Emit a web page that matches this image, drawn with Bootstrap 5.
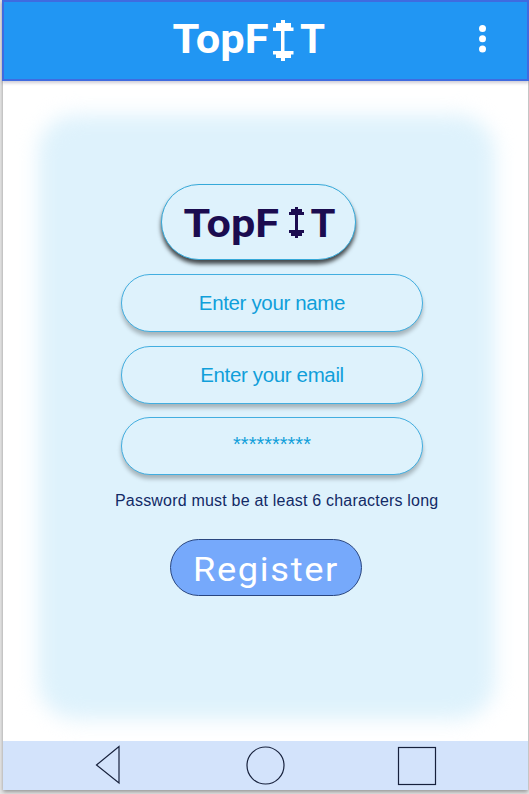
<!DOCTYPE html>
<html lang="en">
<head>
<meta charset="utf-8">
<meta name="viewport" content="width=device-width, initial-scale=1">
<title>TopFIT</title>
<link rel="stylesheet" href="https://cdn.jsdelivr.net/npm/bootstrap@5.3.0/dist/css/bootstrap.min.css">
<style>
body{background:#e6e6e6;font-family:"Liberation Sans",Arial,sans-serif;height:794px;overflow:hidden}
.phone{width:525px;height:790px;margin-left:3px;background:#fff;box-shadow:0 2px 4px rgba(0,0,0,.35)}
.topbar{height:81px;margin:0 -1px;background:#2196f3;border:2px solid #3f6be0;box-shadow:0 2px 3px rgba(60,50,90,.25);z-index:2}
.brand{width:152px;height:44px;margin:18px 0 0 169px}
.dots{width:8px;height:28px;margin:23px 0 0 153px}
svg{display:block;overflow:visible}
svg text{font-family:Roboto,"Liberation Sans",sans-serif}
.panel{height:660px;padding-top:103px;isolation:isolate}
.panel::before{content:"";position:absolute;z-index:-1;left:35px;right:33px;top:34px;bottom:22px;border-radius:38px;background:#def2fc;filter:blur(10px)}
.logo-pill{width:195px;height:76px;margin-left:158px;border:1px solid #35a9d9;background:#def2fc;box-shadow:0 4px 4px rgba(0,0,0,.7)}
.logo-pill svg{margin:22px 0 0 22px}
.field{width:302px;height:58px;margin-left:118px;border:1px solid #42aee0;background:#def2fc;color:#109fda;font-size:20.5px;letter-spacing:-.35px;text-align:center;box-shadow:0 4px 4px rgba(0,0,0,.26);padding:0}
.field::placeholder{color:#109fda;opacity:1}
.field:focus{background:#def2fc;color:#109fda}
.field-secret{padding-bottom:4px;font-size:20px;letter-spacing:0}
.hint{margin:14px 0 0 112px;height:24px;line-height:24px;color:#122a66;font-size:16px;letter-spacing:.2px}
.register{width:192px;height:57px;margin:26px 0 0 167px;background:#76a9fb;border:1px solid #294680;padding:0}
.register text{letter-spacing:1.5px}
.navbar-soft{height:49px;background:#d3e3fb}
</style>
</head>
<body>
<div class="phone d-flex flex-column">
  <header class="topbar position-relative d-flex align-items-start">
    <svg class="brand" viewBox="0 0 152 44" fill="#fff" font-size="41" font-weight="700" aria-label="TopFIT">
      <text x="-.5" y="32.600" textLength="96" lengthAdjust="spacingAndGlyphs">TopF</text>
      <path d="M108 0h4v3h6v4.500h2.500V11h-9v20h9v3.500H118V38h-6v3h-4v-3h-5v-3.500h-3V31h8V11h-8V7.500h3V3h5z"/>
      <text x="127" y="32.600" textLength="25" lengthAdjust="spacingAndGlyphs">T</text>
    </svg>
    <svg class="dots" viewBox="0 0 8 28" fill="#fff"><circle cx="4.500" cy="3.500" r="3.500"/><circle cx="4.500" cy="13.800" r="3.500"/><circle cx="4.500" cy="24" r="3.500"/></svg>
  </header>
  <main class="panel position-relative">
    <div class="logo-pill rounded-pill d-flex align-items-start">
      <svg width="152" height="34" viewBox="0 0 152 34" fill="#1b0c50" font-size="39.500" font-weight="700" aria-label="TopFIT">
        <text x="-.5" y="30.200" textLength="95.500" lengthAdjust="spacingAndGlyphs">TopF</text>
        <path d="M111 0h3v2h4v3h2v3h-6v15h6v3h-2v3h-4v2h-3v-2h-4v-3h-2v-3h6V8h-6V5h2V2h4z"/>
        <text x="126.500" y="30.200" textLength="25" lengthAdjust="spacingAndGlyphs">T</text>
      </svg>
    </div>
    <form>
      <input class="field form-control rounded-pill" style="margin-top:14px" placeholder="Enter your name" aria-label="Name">
      <input class="field form-control rounded-pill" style="margin-top:14px" placeholder="Enter your email" aria-label="Email">
      <input class="field field-secret form-control rounded-pill" style="margin-top:13px" placeholder="**********" aria-label="Password">
      <p class="hint text-nowrap">Password must be at least 6 characters long</p>
      <button type="button" class="register btn rounded-pill d-block">
        <svg width="190" height="55" viewBox="0 0 190 55" fill="#fff" font-size="33"><text x="22" y="41" textLength="146" lengthAdjust="spacingAndGlyphs">Register</text></svg>
      </button>
    </form>
  </main>
  <nav class="navbar-soft">
    <svg width="525" height="49" viewBox="0 0 525 49" fill="none" stroke="#17213c" stroke-width="1.200">
      <path d="M93.500 24L116 5.500V42z"/><circle cx="262.500" cy="24.500" r="18.500"/><rect x="395.500" y="6.500" width="37" height="37"/>
    </svg>
  </nav>
</div>
<script src="https://cdn.jsdelivr.net/npm/bootstrap@5.3.0/dist/js/bootstrap.bundle.min.js"></script>
</body>
</html>
